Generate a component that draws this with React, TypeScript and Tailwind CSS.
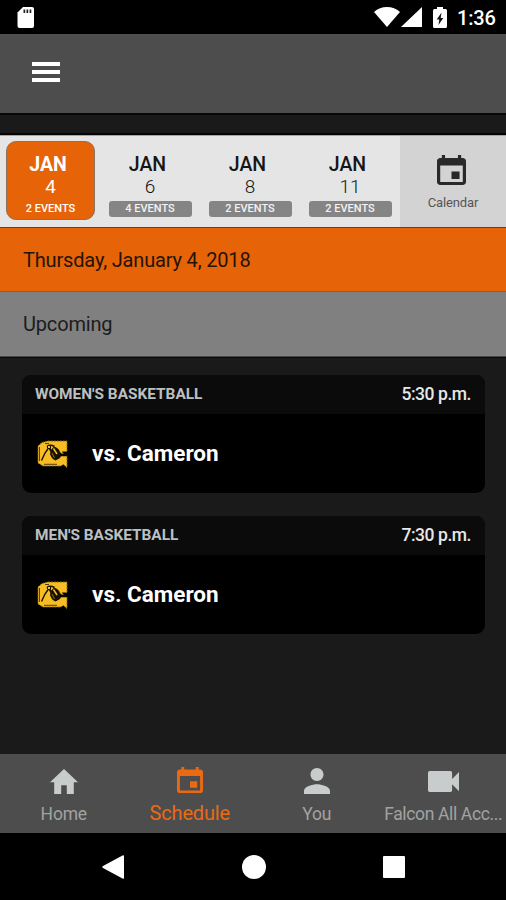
import type { ReactNode } from "react";

const EVENT_PATH =
  "M17 12h-5v5h5v-5zM16 1v2H8V1H6v2H5c-1.11 0-1.99.9-1.99 2L3 19c0 1.1.89 2 2 2h14c1.1 0 2-.9 2-2V5c0-1.1-.9-2-2-2h-1V1h-2zm3 18H5V8h14v11z";

function Glyph({ d, box, className }: { d: string; box: string; className: string }) {
  return (
    <svg viewBox={box} preserveAspectRatio="none" fill="currentColor" className={className}>
      <path d={d} />
    </svg>
  );
}

function StatusBar() {
  return (
    <div className="flex h-[34px] items-start bg-black pt-[7px] text-white">
      <svg viewBox="0 0 17 21" className="ml-[17px] h-[21px] w-[17px]">
        <path d="M6 0H15Q17 0 17 2V19Q17 21 15 21H2.500Q.5 21 .5 19V5.500Z" fill="#fff" />
        <path d="M6.500 2.500h1.700v3.500H6.500zM9.500 2.500h1.700v3.500H9.500zM12.600 2.500h1.700v3.500h-1.700z" fill="#222" />
      </svg>
      <svg viewBox="0 0 26 20" className="ml-[340px] h-5 w-[26px]">
        <path d="M0 5Q5.500 0 13 0T26 5L13 20Z" fill="#fff" />
      </svg>
      <svg viewBox="0 0 21 20" className="ml-[1px] h-5 w-[21px]">
        <path d="M21 0V20H0Z" fill="#fff" />
      </svg>
      <svg viewBox="0 0 14 21" className="ml-[11px] h-[21px] w-[14px]">
        <path d="M4 0h6v2h2.500Q14 2 14 3.500v16Q14 21 12.500 21h-11Q0 21 0 19.500v-16Q0 2 1.500 2H4Z" fill="#fff" />
        <path d="M8.500 5.500 3.700 12.500h2.600L5.500 18l4.800-7H7.700Z" fill="#111" />
      </svg>
      <span className="ml-[10px] text-[20px] leading-[22px] font-medium tracking-[-0.2px]">1:36</span>
    </div>
  );
}

function Day({ day, events, active }: { day: string; events: string; active?: boolean }) {
  return (
    <div className="flex w-[100px] justify-center pt-[5px]">
      <div
        className={
          active
            ? "mr-[-1px] flex h-[79px] w-[89px] flex-col items-center rounded-[10px] border border-[#8a7262] bg-[#e76307] text-white"
            : "flex h-[79px] w-[90px] flex-col items-center border border-transparent text-[#161616]"
        }
      >
        <div className="mt-[12px] h-[22px] pr-[5px] text-[19.5px] leading-[22px]">
          <span className={active ? "font-bold" : "font-medium"}>JAN</span>
        </div>
        <div className={active ? "h-[22px] text-[19px] leading-[21px]" : "h-[22px] text-[19px] leading-[21px] font-light"}>
          {day}
        </div>
        <div
          className={
            active
              ? "mt-[3px] h-[16px] text-[11px] leading-[16px] font-medium whitespace-nowrap"
              : "mt-[3px] h-[16px] w-[83px] rounded-[3px] bg-[#858585] text-center text-[11px] leading-[16px] font-medium whitespace-nowrap text-[#f2f2f2]"
          }
        >
          {events}
        </div>
      </div>
    </div>
  );
}

function TeamLogo() {
  return (
    <svg viewBox="0 0 32 28" className="h-7 w-8">
      <path
        d="M6 2.500 12 1h19v10.500h-5l2 3.500h3v12.500l-3.500-3-3 1.500H7L2 23V6z"
        fill="#f6bd25"
        stroke="#8a690c"
        strokeWidth="1"
        strokeDasharray="2 1"
      />
      <path d="M3.500 7v14M9 3.500h4M8 24.300h13" stroke="#2c2104" strokeWidth=".8" fill="none" />
      <path d="M12.500 8 9 13 5.500 20.500" fill="none" stroke="#171204" strokeWidth="1.400" />
      <path d="M11 6.500Q14 4 18.500 6.500" fill="none" stroke="#171204" strokeWidth="1.500" />
      <path d="M13.500 8 19 18.500" fill="none" stroke="#171204" strokeWidth="2" />
      <path d="M18 6.500q5 1.500 6 5.500l2 2-2 4-4.500 2.500q-4-1.500-5.500-6.500l1-4Z" fill="#171204" />
      <path d="M24 15h8" stroke="#090804" strokeWidth="2.500" />
      <path d="m17.500 8.500 3.500 5.500" stroke="#f6bd25" strokeWidth="1.500" />
      <path d="m16 13 2.500 5" stroke="#b98d18" strokeWidth=".8" />
      <circle cx="13" cy="7" r="1.700" fill="#f6bd25" stroke="#171204" />
    </svg>
  );
}

function GameCard({ sport, time }: { sport: string; time: string }) {
  return (
    <article className="h-[118px] overflow-hidden rounded-[9px] bg-black">
      <div className="flex h-[39px] items-center justify-between bg-[#0b0b0b] pr-[14px] pb-[2px] pl-[13px]">
        <span className="text-[15.4px] leading-5 font-bold text-[#bcc0c0]">{sport}</span>
        <span className="text-[17.5px] leading-5 font-medium tracking-[-0.45px] text-[#e7e7e7]">{time}</span>
      </div>
      <div className="flex h-[79px] items-center pl-[14px]">
        <TeamLogo />
        <span className="ml-[24px] pb-px text-[22.5px] leading-6 font-bold text-white">vs. Cameron</span>
      </div>
    </article>
  );
}

function Tab({
  label,
  children,
  active,
  tight,
}: {
  label: string;
  children: ReactNode;
  active?: boolean;
  tight?: boolean;
}) {
  return (
    <div
      className={
        active
          ? "flex w-[126.5px] flex-col items-center text-[#ea6a14]"
          : "flex w-[126.5px] flex-col items-center pl-[1px] text-[#c8cccc]"
      }
    >
      <div className="mt-[13px] flex h-[28px] w-full items-center justify-center">{children}</div>
      <span
        className={
          active
            ? "mt-[6px] text-[20px] leading-[24px] tracking-[-0.15px] whitespace-nowrap"
            : tight
              ? "mt-[7px] text-[17.5px] leading-[24px] tracking-[-0.35px] whitespace-nowrap text-[#a2a2a2]"
              : "mt-[7px] text-[17.5px] leading-[24px] tracking-[-0.2px] whitespace-nowrap text-[#a2a2a2]"
        }
      >
        {label}
      </span>
    </div>
  );
}

export default function App() {
  return (
    <div className="flex h-[900px] w-[506px] flex-col overflow-hidden bg-[#1a1a1a] font-['Roboto',sans-serif]">
      <StatusBar />
      <header className="h-[79px] bg-[#4d4d4d] pt-[28px] pl-[32px]">
        <div className="flex w-[28px] flex-col gap-[4px]">
          <div className="h-[4px] bg-white" />
          <div className="h-[4px] bg-white" />
          <div className="h-[4px] bg-white" />
        </div>
      </header>
      <div className="h-[22px] border-t-2 border-b-2 border-t-[#070707] border-b-[#050505]" />

      <section className="flex h-[92px] border-t border-[#a5a5a5] bg-[#e5e5e5]">
        <Day day="4" events="2 EVENTS" active />
        <Day day="6" events="4 EVENTS" />
        <Day day="8" events="2 EVENTS" />
        <Day day="11" events="2 EVENTS" />
        <div className="flex w-[106px] flex-col items-center bg-[#d3d3d3] pt-[19px] text-[#292929]">
          <Glyph d={EVENT_PATH} box="3 1 18 20" className="mr-[4px] h-[30px] w-[29px]" />
          <span className="mt-[9px] text-[13px] leading-[18px] tracking-[-0.15px] text-[#555555]">Calendar</span>
        </div>
      </section>

      <div className="h-[65px] border-t border-b border-t-[#8c2f10] border-b-[#a2561c] bg-[#e76307] pl-[23px] text-[20px] leading-[64px] tracking-[-0.17px] text-[#241408]">
        Thursday, January 4, 2018
      </div>
      <div className="h-[65px] border-b border-[#4a4a4a] bg-[#808080] pl-[23px] text-[20px] leading-[65px] tracking-[-0.17px] text-[#1c1c1c]">
        Upcoming
      </div>

      <main className="flex flex-1 flex-col gap-[23px] border-t border-[#080808] pt-[17px] pr-[21px] pl-[22px]">
        <GameCard sport="WOMEN'S BASKETBALL" time="5:30 p.m." />
        <GameCard sport="MEN'S BASKETBALL" time="7:30 p.m." />
      </main>

      <nav className="flex h-[79px] bg-[#4d4d4d]">
        <Tab label="Home">
          <Glyph d="M10 20v-6h4v6h5v-8h3L12 3 2 12h3v8z" box="2 3 20 17" className="h-[25px] w-[28px]" />
        </Tab>
        <Tab label="Schedule" active>
          <Glyph d={EVENT_PATH} box="3 1 18 20" className="mb-[2px] h-[26px] w-[26px]" />
        </Tab>
        <Tab label="You">
          <Glyph
            d="M12 12c2.210 0 4-1.790 4-4s-1.790-4-4-4-4 1.790-4 4 1.790 4 4 4zm0 2c-2.670 0-8 1.340-8 4v2h16v-2c0-2.660-5.330-4-8-4z"
            box="4 4 16 16"
            className="h-[26px] w-[26px]"
          />
        </Tab>
        <Tab label="Falcon All Acc..." tight>
          <Glyph
            d="M17 10.500V7c0-.55-.45-1-1-1H4c-.55 0-1 .45-1 1v10c0 .55.45 1 1 1h12c.55 0 1-.45 1-1v-3.500l4 4v-11l-4 4z"
            box="3 6 18 12"
            className="h-[21px] w-[31px]"
          />
        </Tab>
      </nav>

      <footer className="flex h-[67px] items-center bg-black">
        <svg viewBox="0 0 22 24" className="ml-[102px] h-6 w-[22px]">
          <path d="M20.500.4Q22-.2 22 1V23Q22 24.200 20.500 23.600L1 13Q-.5 12 1 11Z" fill="#fff" />
        </svg>
        <div className="ml-[118px] size-[24px] rounded-full bg-white" />
        <div className="ml-[117px] size-[22px] rounded-[1px] bg-white" />
      </footer>
    </div>
  );
}
